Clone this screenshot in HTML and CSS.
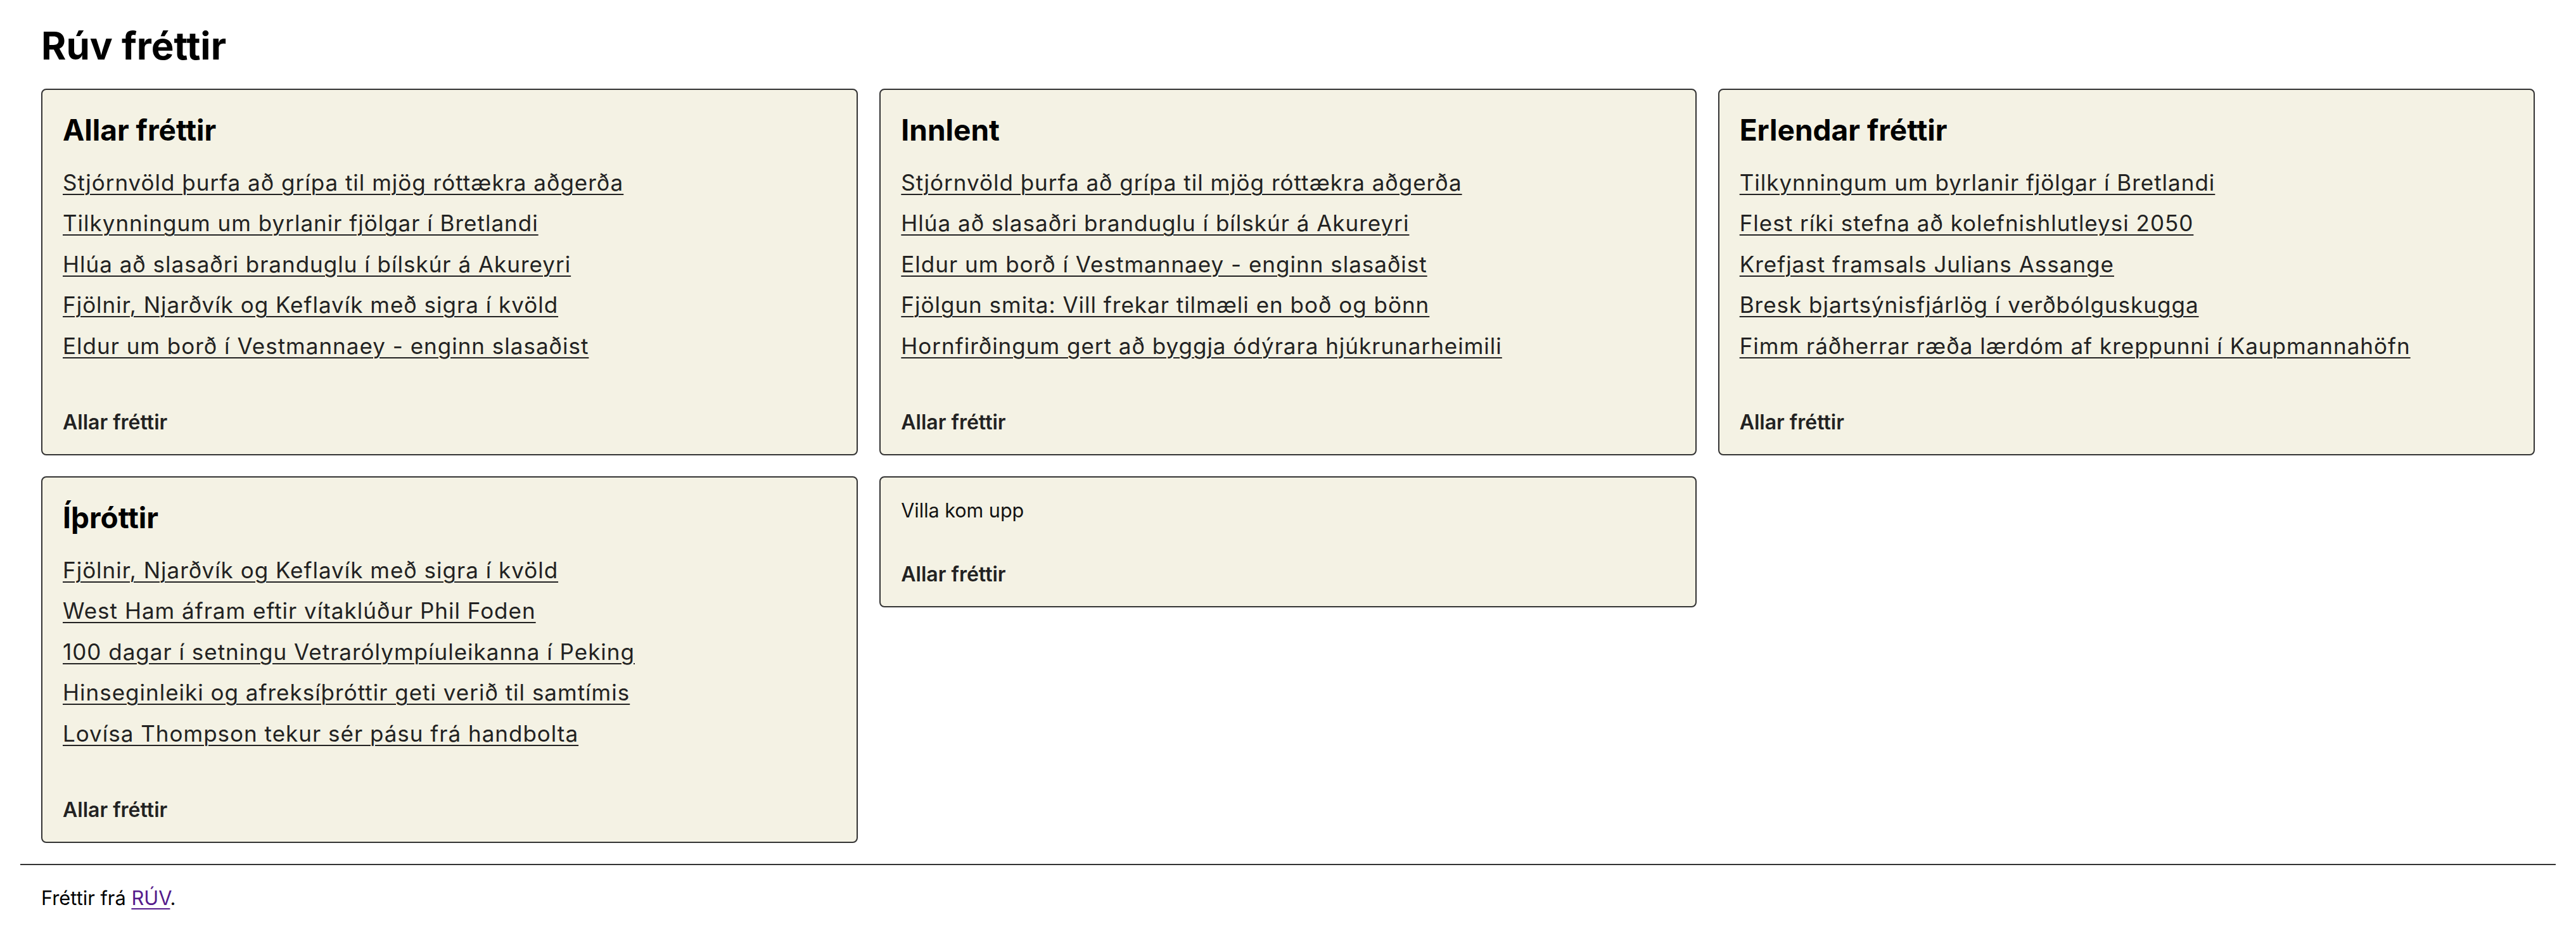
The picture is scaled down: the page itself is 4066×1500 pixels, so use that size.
FILE: index.html
```html
<!DOCTYPE html>
<html lang="is">
<head>
<meta charset="utf-8">
<title>Rúv fréttir</title>
<link rel="stylesheet" href="styles.css">
</head>
<body>
<header class="page-header">
  <h1 class="page-title">Rúv fréttir</h1>
</header>
<main class="grid">
  <section class="card">
    <h2 class="card-title">Allar fréttir</h2>
    <ul class="news-list">
      <li><a href="#">Stjórnvöld þurfa að grípa til mjög róttækra aðgerða</a></li>
      <li><a href="#">Tilkynningum um byrlanir fjölgar í Bretlandi</a></li>
      <li><a href="#">Hlúa að slasaðri branduglu í bílskúr á Akureyri</a></li>
      <li><a href="#">Fjölnir, Njarðvík og Keflavík með sigra í kvöld</a></li>
      <li><a href="#">Eldur um borð í Vestmannaey - enginn slasaðist</a></li>
    </ul>
    <a class="card-more" href="#">Allar fréttir</a>
  </section>
  <section class="card">
    <h2 class="card-title">Innlent</h2>
    <ul class="news-list">
      <li><a href="#">Stjórnvöld þurfa að grípa til mjög róttækra aðgerða</a></li>
      <li><a href="#">Hlúa að slasaðri branduglu í bílskúr á Akureyri</a></li>
      <li><a href="#">Eldur um borð í Vestmannaey - enginn slasaðist</a></li>
      <li><a href="#">Fjölgun smita: Vill frekar tilmæli en boð og bönn</a></li>
      <li><a href="#">Hornfirðingum gert að byggja ódýrara hjúkrunarheimili</a></li>
    </ul>
    <a class="card-more" href="#">Allar fréttir</a>
  </section>
  <section class="card">
    <h2 class="card-title">Erlendar fréttir</h2>
    <ul class="news-list">
      <li><a href="#">Tilkynningum um byrlanir fjölgar í Bretlandi</a></li>
      <li><a href="#">Flest ríki stefna að kolefnishlutleysi 2050</a></li>
      <li><a href="#">Krefjast framsals Julians Assange</a></li>
      <li><a href="#">Bresk bjartsýnisfjárlög í verðbólguskugga</a></li>
      <li><a href="#">Fimm ráðherrar ræða lærdóm af kreppunni í Kaupmannahöfn</a></li>
    </ul>
    <a class="card-more" href="#">Allar fréttir</a>
  </section>
  <section class="card">
    <h2 class="card-title">Íþróttir</h2>
    <ul class="news-list">
      <li><a href="#">Fjölnir, Njarðvík og Keflavík með sigra í kvöld</a></li>
      <li><a href="#">West Ham áfram eftir vítaklúður Phil Foden</a></li>
      <li><a href="#">100 dagar í setningu Vetrarólympíuleikanna í Peking</a></li>
      <li><a href="#">Hinseginleiki og afreksíþróttir geti verið til samtímis</a></li>
      <li><a href="#">Lovísa Thompson tekur sér pásu frá handbolta</a></li>
    </ul>
    <a class="card-more" href="#">Allar fréttir</a>
  </section>
  <section class="card">
    <p class="card-error">Villa kom upp</p>
    <a class="card-more" href="#">Allar fréttir</a>
  </section>
</main>
<hr class="divider">
<footer class="page-footer">
  <p class="footer-text">Fréttir frá <a class="footer-link" href="#">RÚV</a>.</p>
</footer>
</body>
</html>
```
FILE: styles.css
```css
html, body {
  margin: 0;
  padding: 0;
  background: #ffffff;
}
body {
  font-family: Inter, "Liberation Sans", sans-serif;
  color: #000;
  padding: 0 32px;
}
.page-header {
  padding: 36px 33px 32px;
}
.page-title {
  margin: 0;
  font-size: 60px;
  line-height: 72px;
  font-weight: 700;
  color: #000;
}
.grid {
  display: grid;
  grid-template-columns: repeat(3, 1fr);
  column-gap: 34px;
  row-gap: 33px;
  align-items: start;
  padding: 0 33px;
}
.card {
  display: flex;
  flex-direction: column;
  align-items: flex-start;
  background: #f4f2e4;
  border: 2px solid #333;
  border-radius: 8px;
  padding: 32px 32px 31px;
}
.card-title {
  margin: 0 0 28px;
  font-size: 46px;
  line-height: 62px;
  font-weight: 700;
  color: #000;
}
.news-list {
  list-style: none;
  margin: 0;
  padding: 0;
}
.news-list li {
  font-size: 35px;
  line-height: 48.4px;
  margin-bottom: 16px;
  letter-spacing: 1px;
}
.news-list a {
  color: #222;
  text-decoration: underline;
  text-decoration-thickness: 2px;
  text-underline-offset: 5px;
}
.card-error {
  margin: 0;
  font-size: 30.5px;
  line-height: 40px;
  color: #111;
}
.card-more {
  margin-top: 62px;
  font-size: 32px;
  line-height: 38px;
  font-weight: 600;
  color: #222;
  text-decoration: none;
}
.divider {
  margin: 33px 0 0;
  border: 0;
  border-top: 2px solid #333;
  height: 0;
}
.page-footer {
  padding: 33px 33px 0;
}
.footer-text {
  margin: 0;
  font-size: 30.8px;
  line-height: normal;
  color: #000;
}
.footer-link {
  color: #551a8b;
  text-decoration: underline;
  text-decoration-thickness: 2px;
  text-underline-offset: 5px;
}
```
